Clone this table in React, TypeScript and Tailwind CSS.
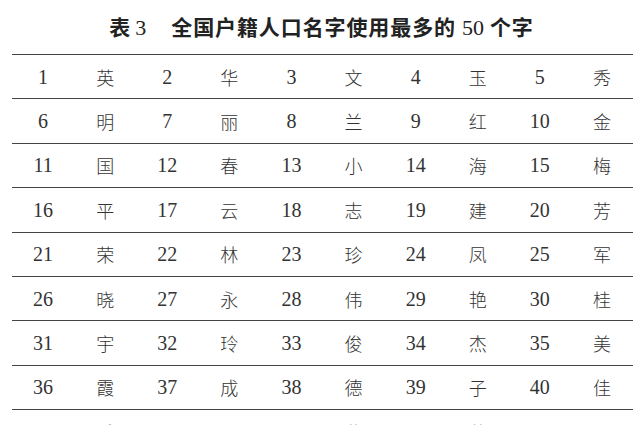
const rows: [number, string][][] = [
  [[1, '英'], [2, '华'], [3, '文'], [4, '玉'], [5, '秀']],
  [[6, '明'], [7, '丽'], [8, '兰'], [9, '红'], [10, '金']],
  [[11, '国'], [12, '春'], [13, '小'], [14, '海'], [15, '梅']],
  [[16, '平'], [17, '云'], [18, '志'], [19, '建'], [20, '芳']],
  [[21, '荣'], [22, '林'], [23, '珍'], [24, '凤'], [25, '军']],
  [[26, '晓'], [27, '永'], [28, '伟'], [29, '艳'], [30, '桂']],
  [[31, '宇'], [32, '玲'], [33, '俊'], [34, '杰'], [35, '美']],
  [[36, '霞'], [37, '成'], [38, '德'], [39, '子'], [40, '佳']],
  [[41, '香'], [42, '勇'], [43, '燕'], [44, '萍'], [45, '丹']],
];

const serif = { fontFamily: '"Liberation Serif", "Noto Sans CJK SC", serif' };

export default function App() {
  return (
    <div className="w-[640px] h-[425px] overflow-hidden bg-white text-[#333]">
      {/* Title */}
      <div className="h-[54px] flex items-center justify-center pl-[3px]">
        <h1
          className="text-[21px] font-semibold text-[#222] flex items-baseline"
          style={{ fontFamily: '"Noto Sans CJK SC", "Liberation Serif", sans-serif' }}
        >
          <span>表</span>
          <span className="ml-[5px] font-normal text-[22px]" style={serif}>3</span>
          <span className="ml-[25px] tracking-[0.9px]">全国户籍人口名字使用最多的</span>
          <span className="mx-[6px] font-normal text-[22px]" style={serif}>50</span>
          <span className="tracking-[0.9px]">个字</span>
        </h1>
      </div>

      {/* Table */}
      <div className="mx-[12px] w-[621px]">
        {rows.map((row, i) => (
          <div
            key={i}
            className="h-[44.4px] border-t-[1.6px] border-[#444] grid grid-cols-10 items-center"
          >
            {row.map(([n, ch]) => (
              <div key={n} className="contents">
                <span className="text-center text-[20px] leading-none" style={serif}>
                  {n}
                </span>
                <span
                  className="text-center text-[18px] leading-none font-light"
                  style={{ fontFamily: '"Noto Sans CJK SC", sans-serif' }}
                >
                  {ch}
                </span>
              </div>
            ))}
          </div>
        ))}
      </div>
    </div>
  );
}
